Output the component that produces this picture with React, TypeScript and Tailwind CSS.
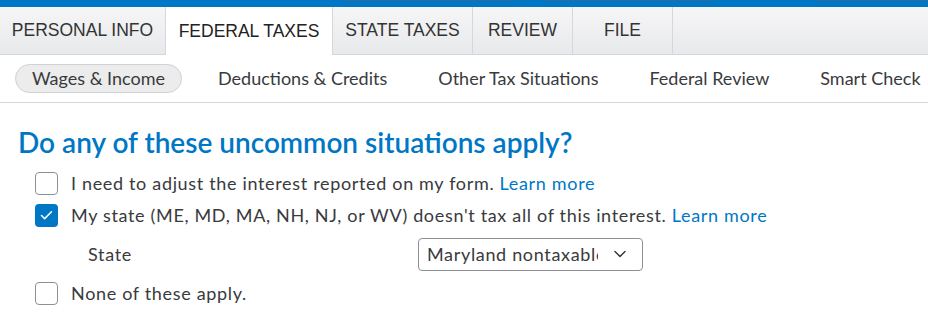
import { ChevronDown, Check } from 'lucide-react'

const TABS = [
  { label: 'PERSONAL INFO', w: 'w-[166px]' },
  { label: 'FEDERAL TAXES', w: 'w-[167px]', active: true },
  { label: 'STATE TAXES', w: 'w-[140px]' },
  { label: 'REVIEW', w: 'w-[100px]' },
  { label: 'FILE', w: 'w-[100px]' },
]

const SUBNAV = ['Deductions & Credits', 'Other Tax Situations', 'Federal Review', 'Smart Check']

const avenir = { fontFamily: 'Lato, "Noto Sans", sans-serif' }

function Box({ checked }: { checked?: boolean }) {
  return checked ? (
    <span className="flex-shrink-0 w-[23px] h-[23px] rounded-[4px] bg-[#0077C5] flex items-center justify-center">
      <Check size={15} strokeWidth={2.5} className="text-white" />
    </span>
  ) : (
    <span className="flex-shrink-0 w-[23px] h-[23px] rounded-[4px] border border-[#8d9096] bg-white" />
  )
}

export default function App() {
  return (
    <div className="w-[928px] h-[317px] overflow-hidden bg-white text-[#393a3d]">
      {/* top bar */}
      <div className="h-[7px] bg-[#0077C5] flex">
        <div className="w-[343px]" />
        <div className="w-[171px] h-[1px] bg-[#2a6ea0]" />
        <div className="w-[30px]" />
        <div className="w-[172px] h-[1px] bg-[#2a6ea0]" />
        <div className="w-[100px]" />
        <div className="flex-1 h-[1px] bg-[#2a6ea0]" />
      </div>

      {/* main tabs */}
      <div className="flex h-[48px] border-b border-[#d4d7dc] bg-gradient-to-b from-[#f6f6f7] to-[#e8e9eb]" style={{ fontFamily: '"Liberation Sans", Arial, sans-serif' }}>
        {TABS.map(t => (
          <div
            key={t.label}
            className={`${t.w} flex items-center justify-center text-[17.5px] border-r border-[#d4d7dc] ${
              t.active ? 'bg-white h-[48px] text-[#222]' : 'text-[#333]'
            }`}
          >
            {t.label}
          </div>
        ))}
      </div>

      {/* sub nav */}
      <div className="flex items-center h-[48px] border-b border-[#d4d7dc] pl-[15px] text-[18px] text-[#393a3d]" style={avenir}>
        <div className="h-[29px] px-[16px] flex items-center rounded-full bg-[#ececec] border border-[#cfd1d4]">
          Wages &amp; Income
        </div>
        <div className="flex gap-[51px] ml-[36px]">
          {SUBNAV.map(s => (
            <span key={s} className="whitespace-nowrap">{s}</span>
          ))}
        </div>
      </div>

      {/* question */}
      <div className="pl-[18px] pt-[22px]" style={avenir}>
        <h1 className="text-[28px] font-semibold text-[#0077C5] leading-[34px]">
          Do any of these uncommon situations apply?
        </h1>
        <div className="pl-[17px] mt-[8px] text-[18px] tracking-[0.037em] text-[#393a3d]">
          <label className="flex items-center gap-[13px] h-[32px]">
            <Box />
            <span className="whitespace-nowrap">
              I need to adjust the interest reported on my form. <span className="text-[#0077C5]">Learn more</span>
            </span>
          </label>
          <label className="flex items-center gap-[13px] h-[32px]">
            <Box checked />
            <span className="whitespace-nowrap">
              My state (ME, MD, MA, NH, NJ, or WV) doesn't tax all of this interest.{' '}
              <span className="text-[#0077C5]">Learn more</span>
            </span>
          </label>
          <div className="flex items-center h-[46px] pl-[53px]">
            <span className="w-[330px]">State</span>
            <div className="w-[225px] h-[33px] border border-[#8d9096] rounded-[4px] flex items-center pl-[8px]">
              <span className="w-[171px] overflow-hidden whitespace-nowrap">Maryland nontaxable</span>
              <ChevronDown size={20} strokeWidth={1.8} className="text-[#393a3d] ml-[12px] flex-shrink-0" />
            </div>
          </div>
          <label className="flex items-center gap-[13px] h-[32px]">
            <Box />
            <span>None of these apply.</span>
          </label>
        </div>
      </div>
    </div>
  )
}
